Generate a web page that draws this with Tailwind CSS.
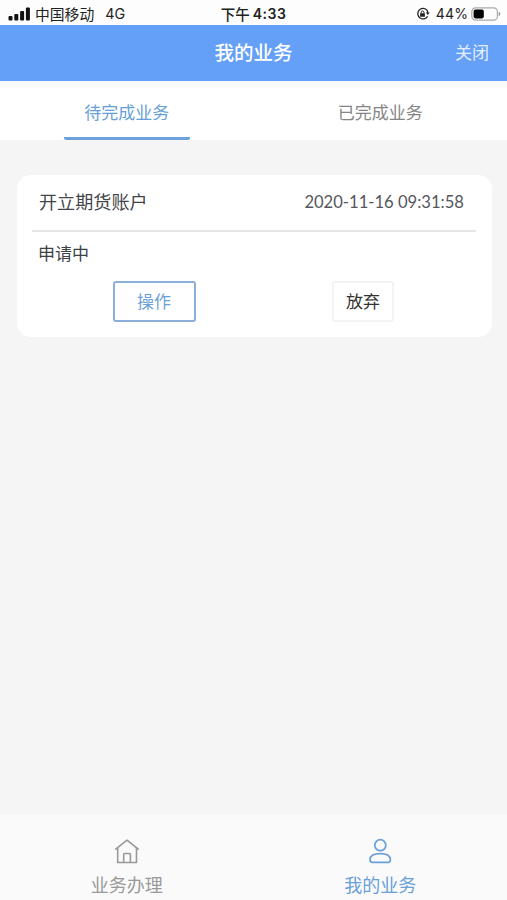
<!DOCTYPE html>
<html lang="zh-CN">
<head>
    <meta charset="UTF-8">
    <meta name="viewport" content="width=device-width, initial-scale=1.0">
    <title>我的业务</title>
    <script src="https://cdn.jsdelivr.net/npm/@tailwindcss/browser@4"></script>
</head>
<body class="bg-[#f5f5f5] font-['Noto_Sans_CJK_SC',sans-serif]">
    <div class="flex h-[900px] w-[507px] flex-col overflow-hidden">
        <!-- 状态栏 -->
        <div class="grid h-[25px] shrink-0 grid-cols-3 items-center bg-[#fdfdfd] text-[#222]">
            <div class="flex items-center pt-px pl-2">
                <svg class="mr-[5px] h-[14px] w-[22px]" viewBox="0 0 22 14" fill="#111">
                    <rect x="0.5" y="9" width="4" height="4.5" rx="1"/>
                    <rect x="6.3" y="7" width="4" height="6.5" rx="1"/>
                    <rect x="12.1" y="4" width="4" height="9.5" rx="1"/>
                    <rect x="17.9" y="0.5" width="4" height="13" rx="1"/>
                </svg>
                <span class="text-[14.8px] leading-6 whitespace-nowrap">中国移动</span>
                <span class="ml-[11px] pt-px font-['Inter',sans-serif] text-[14.3px] leading-6">4G</span>
            </div>
            <div class="flex items-center justify-center pt-px font-medium whitespace-nowrap">
                <span class="text-[14.5px] leading-6">下午</span>
                <span class="ml-[3px] pt-px font-['Inter',sans-serif] text-[14px] leading-6 font-semibold tracking-[0.5px]">4:33</span>
            </div>
            <div class="flex items-center justify-end pt-px pr-[6px]">
                <svg class="mr-[6px] h-[14px] w-[14px]" viewBox="0 0 14 14" fill="none" stroke="#222" stroke-width="1.3">
                    <path d="M10.6 2.7A5.3 5.3 0 1 0 11.6 9.4"/>
                    <path d="M9.9 5.5h3.8l-1.9 2.6z" fill="#222" stroke="none"/>
                    <path d="M11.8 6.2A5.3 5.3 0 0 0 10.6 2.7"/>
                    <rect x="4.1" y="6.2" width="4.8" height="3.6" rx="0.6" fill="#222" stroke="none"/>
                    <path d="M5.1 6.5V5.3a1.4 1.4 0 0 1 2.8 0v1.2" stroke-width="1"/>
                </svg>
                <span class="pt-px font-['Inter',sans-serif] text-[14px] leading-6 tracking-[0.1px]">44%</span>
                <svg class="ml-[3px] h-[14px] w-[30px]" viewBox="0 0 30 14">
                    <rect x="0.8" y="0.9" width="25.6" height="12.2" rx="3.8" fill="none" stroke="#aaa" stroke-width="1.2"/>
                    <rect x="2.6" y="2.6" width="10.2" height="8.8" rx="1.8" fill="#000"/>
                    <path d="M27.7 4.8v4.4c1-.4 1.6-1.2 1.6-2.2s-.6-1.8-1.6-2.2z" fill="#999"/>
                </svg>
            </div>
        </div>

        <!-- 标题栏 -->
        <header class="grid h-14 shrink-0 grid-cols-3 items-center bg-[#64a0f8] pb-[2px] text-white">
            <h1 class="col-start-2 text-center text-[19.5px] font-medium">我的业务</h1>
            <a class="pr-[18px] text-right text-[17px] text-[#e4effd]">关闭</a>
        </header>

        <!-- 标签页 -->
        <nav class="grid h-[59px] shrink-0 grid-cols-2 bg-linear-to-b from-[#f7f8f9] to-white to-15% text-[17px]">
            <div class="flex justify-center">
                <div class="flex w-[126px] items-center justify-center rounded-b-[2px] border-b-[3px] border-[#6ca2dc] pt-[5px] text-[#669fd9]">待完成业务</div>
            </div>
            <div class="flex items-center justify-center pt-[2px] text-[#858585]">已完成业务</div>
        </nav>

        <!-- 业务列表 -->
        <main class="flex-1 pt-[35px] pr-[15px] pl-[17px]">
            <section class="h-[162px] rounded-[14px] bg-white px-4">
                <div class="-ml-px flex h-[57px] items-center justify-between border-b-2 border-[#e6e6e8] pr-[12px] pb-px pl-[7px]">
                    <h2 class="text-[18.1px] text-[#444549]">开立期货账户</h2>
                    <time class="font-['Lato',sans-serif] text-[16.6px] text-[#55565b]">2020-11-16 09:31:58</time>
                </div>
                <p class="pt-[8px] pl-[5px] text-[17px] leading-[26px] text-[#404146]">申请中</p>
                <div class="mt-[15px] flex">
                    <button class="ml-20 h-[41px] w-[83px] rounded-[3px] border-2 border-[#8baedb] pr-px pb-px text-[17px] text-[#6c9fd8]">操作</button>
                    <button class="ml-[136px] h-[41px] w-[62px] rounded-[3px] border-2 border-[#f3f3f3] pb-px text-[17px] text-[#333]">放弃</button>
                </div>
            </section>
        </main>

        <!-- 底部导航 -->
        <footer class="grid h-[86px] shrink-0 grid-cols-2 bg-[#fafafa] text-[18px] leading-[27px]">
            <div class="flex flex-col items-center pt-[24px] text-[#999]">
                <svg class="h-[27px] w-[26px]" viewBox="0 0 26 27" fill="none" stroke="currentColor" stroke-width="1.6" stroke-linejoin="round" stroke-linecap="round">
                    <path d="M1.8 11.2L13 2.2l11.2 9"/>
                    <path d="M3.7 9.8V24.5H22.5V9.8"/>
                    <path d="M9.7 24.3V16.5q0-1 1-1h4.7q1 0 1 1V24.3"/>
                </svg>
                <span class="mt-[6px]">业务办理</span>
            </div>
            <div class="flex flex-col items-center pt-[24px] text-[#6a9fd9]">
                <svg class="h-[27px] w-[26px]" viewBox="0 0 26 27" fill="none" stroke="currentColor" stroke-width="1.7">
                    <circle cx="13.3" cy="7.2" r="5.5"/>
                    <path d="M3 21.8C3 17.5 7 15.6 13.2 15.6S23.4 17.5 23.4 21.8Q23.4 24.3 21 24.3H5.4Q3 24.3 3 21.8z"/>
                </svg>
                <span class="mt-[6px]">我的业务</span>
            </div>
        </footer>
    </div>
</body>
</html>
